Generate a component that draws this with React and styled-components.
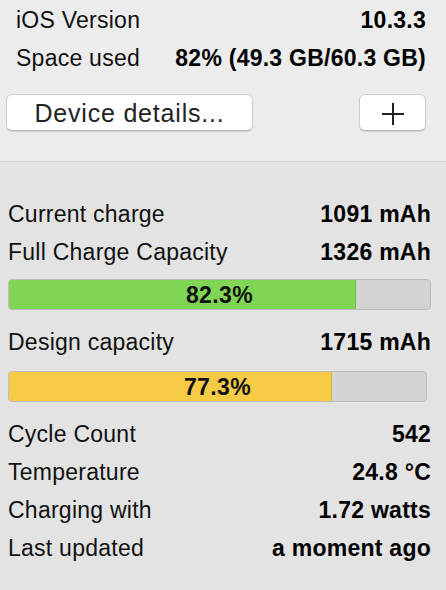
import React from 'react';
import styled, { createGlobalStyle } from 'styled-components';

const GlobalStyle = createGlobalStyle`
  body {
    margin: 0;
    background: #e3e3e3;
  }
`;

const Page = styled.div`
  width: 446px;
  height: 590px;
  overflow: hidden;
  font-family: "Liberation Sans", Arial, sans-serif;
  color: #111;
  background: #e3e3e3;
`;

const DeviceSection = styled.div`
  height: 162px;
  box-sizing: border-box;
  padding: 0 20px 0 6px;
  background: #ececec;
  border-bottom: 1px solid #d4d4d4;
`;

const BatterySection = styled.div`
  padding: 32px 15px 0 8px;
  display: flex;
  flex-direction: column;
`;

const InfoRow = styled.div`
  height: 38px;
  box-sizing: border-box;
  padding-top: 2px;
  display: flex;
  align-items: center;
  justify-content: space-between;
  padding-left: ${props => props.indent || '0px'};
  font-size: 23px;
  letter-spacing: 0.25px;
`;

const Label = styled.span`
  color: #111;
`;

const Value = styled.span`
  font-weight: bold;
  color: #000;
`;

const ButtonRow = styled.div`
  margin-top: 18px;
  display: flex;
  justify-content: space-between;
`;

const MacButton = styled.button`
  width: ${props => props.width};
  height: 37px;
  display: flex;
  align-items: center;
  justify-content: center;
  padding: 2px 0 0 0;
  background: #fff;
  border: 1px solid #cfcfcf;
  border-bottom-color: #b9b9b9;
  border-radius: 6px;
  box-shadow: 0 1px 1px rgba(0, 0, 0, 0.12);
  font-family: "Liberation Sans", Arial, sans-serif;
  font-size: 25px;
  letter-spacing: 0.8px;
  color: #222;
`;

const Bar = styled.div`
  position: relative;
  height: 31px;
  box-sizing: border-box;
  margin: ${props => props.margin};
  background: #d3d3d3;
  border: 1px solid #bdbdbd;
  border-radius: 4px;
  overflow: hidden;
  display: flex;
  align-items: center;
  justify-content: center;
`;

const BarFill = styled.div`
  position: absolute;
  left: 0;
  top: 0;
  bottom: 0;
  background: ${props => props.color};
  border-right: 1px solid ${props => props.edge};
`;

const BarText = styled.span`
  position: relative;
  padding-top: 2px;
  font-size: 23px;
  font-weight: bold;
  letter-spacing: 0.4px;
  color: #111;
`;

function PlusIcon() {
  return (
    <svg width="24" height="24" viewBox="0 0 24 24">
      <path d="M12 1v22M1 12h22" stroke="#222" strokeWidth="2" fill="none" />
    </svg>
  );
}

function Capacity({ percent, color, edge, margin }) {
  return (
    <Bar margin={margin}>
      <BarFill color={color} edge={edge} style={{ width: `${percent}%` }} />
      <BarText>{percent}%</BarText>
    </Bar>
  );
}

export default function App() {
  return (
    <Page>
      <GlobalStyle />
      <DeviceSection>
        <InfoRow indent="10px">
          <Label>iOS Version</Label>
          <Value>10.3.3</Value>
        </InfoRow>
        <InfoRow indent="10px">
          <Label>Space used</Label>
          <Value>82% (49.3 GB/60.3 GB)</Value>
        </InfoRow>
        <ButtonRow>
          <MacButton width="247px">Device details...</MacButton>
          <MacButton width="67px"><PlusIcon /></MacButton>
        </ButtonRow>
      </DeviceSection>
      <BatterySection>
        <InfoRow>
          <Label>Current charge</Label>
          <Value>1091 mAh</Value>
        </InfoRow>
        <InfoRow>
          <Label>Full Charge Capacity</Label>
          <Value>1326 mAh</Value>
        </InfoRow>
        <Capacity percent={82.3} color="#80d654" edge="#6cbf44" margin="9px 0 12px 0" />
        <InfoRow>
          <Label>Design capacity</Label>
          <Value>1715 mAh</Value>
        </InfoRow>
        <Capacity percent={77.3} color="#f6ca45" edge="#e0b43a" margin="11px 4px 12px 0" />
        <InfoRow>
          <Label>Cycle Count</Label>
          <Value>542</Value>
        </InfoRow>
        <InfoRow>
          <Label>Temperature</Label>
          <Value>24.8 °C</Value>
        </InfoRow>
        <InfoRow>
          <Label>Charging with</Label>
          <Value>1.72 watts</Value>
        </InfoRow>
        <InfoRow>
          <Label>Last updated</Label>
          <Value>a moment ago</Value>
        </InfoRow>
      </BatterySection>
    </Page>
  );
}
